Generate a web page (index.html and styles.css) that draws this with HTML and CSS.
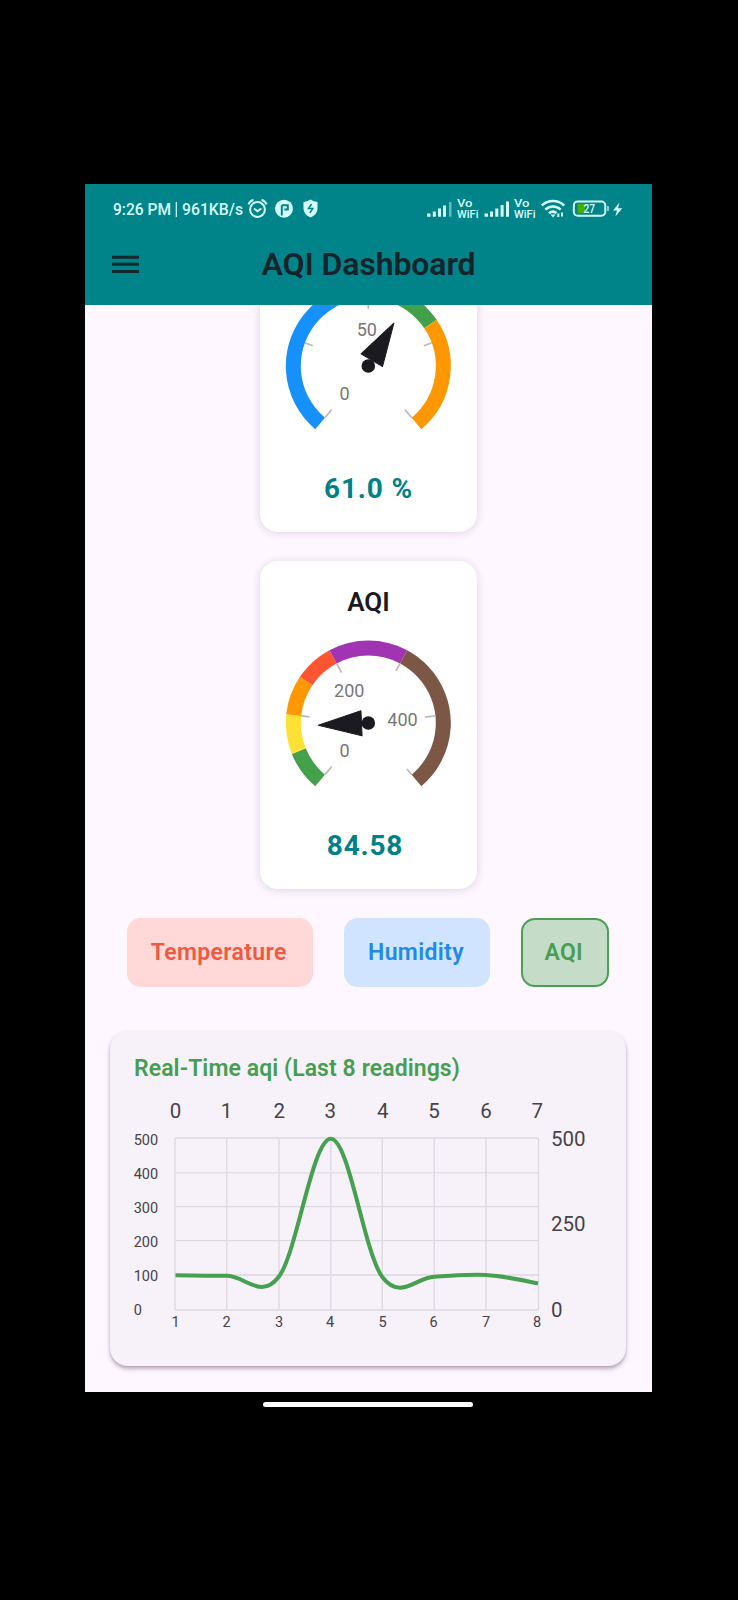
FILE: index.html
```html
<!DOCTYPE html>
<html lang="en">
<head>
<meta charset="utf-8">
<title>AQI Dashboard</title>
<link rel="stylesheet" href="styles.css">
</head>
<body>
<div class="screen">
  <header class="top">
    <svg class="status" viewBox="85 184 567 50" width="567" height="50">
      <g class="status-text">
        <text x="113" y="215" textLength="58" lengthAdjust="spacingAndGlyphs">9:26 PM</text>
        <text x="182" y="215" textLength="61" lengthAdjust="spacingAndGlyphs">961KB/s</text>
      </g>
      <path d="M176.300 202v15" class="line thin"/>
      <!-- alarm -->
      <circle cx="257.500" cy="209.500" r="7.400" class="line"/>
      <path d="M254 208.500l3.500 2.700 3.800-2.700M248.500 204.300q1.500-3.600 5-4.300M266.500 204.300q-1.500-3.600-5-4.300" class="line"/>
      <!-- app badge -->
      <circle cx="284" cy="208.700" r="9" class="fill"/>
      <path d="M281.800 215.500v-10.300M281.800 205.200h6v4.300h-3.500" class="cut"/>
      <!-- shield -->
      <path d="M310.500 199.500q3.500 2.300 7 2.500v6.500q0 6-7 9-7-3-7-9V202q3.500-.2 7-2.500z" class="fill"/>
      <path d="M311.500 204l-3 4.600h4.300l-3 4.400" class="cut fine"/>
      <!-- signals -->
      <g class="fill">
        <rect x="427" y="213.500" width="3.500" height="3.200"/><rect x="432.800" y="211.500" width="3" height="5.200"/><rect x="438" y="208.500" width="3" height="8.200"/><rect x="443" y="205.500" width="3" height="11.200"/><rect x="449" y="202" width="2.500" height="14.700" opacity=".45"/>
        <rect x="484.500" y="213.500" width="3.500" height="3.200"/><rect x="490" y="211.500" width="3" height="5.200"/><rect x="495.300" y="208.500" width="3" height="8.200"/><rect x="500.600" y="205" width="3" height="11.700"/><rect x="506" y="201.500" width="3" height="15.200"/>
      </g>
      <g class="vo">
        <text x="457" y="207.300" textLength="15.500" lengthAdjust="spacingAndGlyphs">Vo</text>
        <text x="457" y="218.300" textLength="21.500" lengthAdjust="spacingAndGlyphs">WiFi</text>
        <text x="514" y="207.300" textLength="15.500" lengthAdjust="spacingAndGlyphs">Vo</text>
        <text x="514" y="218.300" textLength="21.500" lengthAdjust="spacingAndGlyphs">WiFi</text>
      </g>
      <!-- wifi -->
      <path d="M541.800 205.500a16 16 0 0 1 22.400 0M545.300 209.700a11 11 0 0 1 15.400 0M549 213.300a6 6 0 0 1 7.500-.3" class="line wide"/>
      <path d="M550.500 214.500h5l-2.500 3z" class="fill"/>
      <path d="M558.300 217v-3.500M562 212.500v4" class="line"/>
      <!-- battery -->
      <rect x="573.800" y="201.500" width="31.500" height="14.200" rx="4" class="line"/>
      <rect x="577.500" y="203.800" width="7.500" height="9.500" class="charge"/>
      <path d="M608 206v5" class="line thin"/>
      <text x="583.500" y="213" class="pct" textLength="11.500" lengthAdjust="spacingAndGlyphs">27</text>
      <path d="M619.500 202.500l-6.500 8h4l-1.700 6 7-8.300h-4.300z" class="fill"/>
    </svg>
    <div class="appbar">
      <svg class="menu" viewBox="0 0 27 20" width="27" height="20"><path d="M0 3.300h27M0 10.300h27M0 17.500h27"/></svg>
      <h1>AQI Dashboard</h1>
    </div>
  </header>

  <main>
    <section class="card gauge-card humidity">
      <svg viewBox="278 276 181 166" width="181" height="166">
        <g transform="translate(368.300 366)">
          <g class="ring">
            <path pathLength="280" class="blue" stroke-dasharray="112 400" d="M-48.210 57.450A75 75 0 1 1 48.210 57.450"/>
            <path pathLength="280" class="green" stroke-dasharray="0 112 84 400" d="M-48.210 57.450A75 75 0 1 1 48.210 57.450"/>
            <path pathLength="280" class="orange" stroke-dasharray="0 196 84 400" d="M-48.210 57.450A75 75 0 1 1 48.210 57.450"/>
          </g>
          <g class="tick">
            <path transform="rotate(130)" d="M57 0h10.500"/><path transform="rotate(200)" d="M59 0h8.500"/><path transform="rotate(270)" d="M57 0h10.500"/><path transform="rotate(340)" d="M59 0h8.500"/><path transform="rotate(50)" d="M57 0h10.500"/>
          </g>
          <path class="needle" transform="rotate(300.800)" d="M50 0L6.800 12.500V-12.500z"/>
          <circle r="6.800" class="hub"/>
        </g>
        <g class="scale"><text x="366.800" y="335.700">50</text><text x="344.500" y="400">0</text></g>
      </svg>
      <p class="value">61.0 %</p>
    </section>

    <section class="card gauge-card index">
      <h2>AQI</h2>
      <svg viewBox="278 633.300 181 166" width="181" height="166">
        <g transform="translate(368.300 723.300)">
          <g class="ring">
            <path pathLength="280" class="green" stroke-dasharray="28 400" d="M-48.210 57.450A75 75 0 1 1 48.210 57.450"/>
            <path pathLength="280" class="yellow" stroke-dasharray="0 28 28 400" d="M-48.210 57.450A75 75 0 1 1 48.210 57.450"/>
            <path pathLength="280" class="orange" stroke-dasharray="0 56 28 400" d="M-48.210 57.450A75 75 0 1 1 48.210 57.450"/>
            <path pathLength="280" class="red" stroke-dasharray="0 84 28 400" d="M-48.210 57.450A75 75 0 1 1 48.210 57.450"/>
            <path pathLength="280" class="purple" stroke-dasharray="0 112 56 400" d="M-48.210 57.450A75 75 0 1 1 48.210 57.450"/>
            <path pathLength="280" class="brown" stroke-dasharray="0 168 112 400" d="M-48.210 57.450A75 75 0 1 1 48.210 57.450"/>
          </g>
          <g class="tick">
            <path transform="rotate(130)" d="M57 0h10.500"/><path transform="rotate(186)" d="M59 0h8.500"/><path transform="rotate(242)" d="M57 0h10.500"/><path transform="rotate(298)" d="M59 0h8.500"/><path transform="rotate(354)" d="M57 0h10.500"/><path transform="rotate(50)" d="M60 0h7.500"/>
          </g>
          <path class="needle" transform="rotate(177.400)" d="M50 0L6.800 12.500V-12.500z"/>
          <circle r="6.800" class="hub"/>
        </g>
        <g class="scale"><text x="349.300" y="697.300">200</text><text x="402.500" y="726.300">400</text><text x="344.500" y="757.300">0</text></g>
      </svg>
      <p class="value">84.58</p>
    </section>

    <nav class="tabs">
      <button class="tab temp">Temperature</button>
      <button class="tab hum">Humidity</button>
      <button class="tab aqi">AQI</button>
    </nav>

    <section class="chart-card">
      <h3>Real-Time aqi (Last 8 readings)</h3>
      <svg viewBox="110 1090 516 250" width="516" height="250">
        <path class="grid" d="M175 1138H538.500M175 1172.800H538.500M175 1206.700H538.500M175 1240.700H538.500M175 1275H538.500M175 1310H538.500M175 1138V1310M226.700 1138V1310M279 1138V1310M330.800 1138V1310M382.300 1138V1310M434.200 1138V1310M486 1138V1310M538.500 1138V1310"/>
        <path class="series" d="M175.500 1275.300C175.500 1275.300 209 1275.800 227 1275.800C245 1275.800 261 1300.500 279 1276.500C297 1252.500 312.500 1138.700 330.800 1138.700C349 1138.700 364 1252.500 382.300 1277C400.500 1301 416 1277.300 434.200 1276.700C452 1276 468 1274 486 1275C504 1276 538 1283.500 538 1283.500"/>
        <g class="axis big mid">
          <text x="175.500" y="1118.300">0</text><text x="226.500" y="1118.300">1</text><text x="279.300" y="1118.300">2</text><text x="330.300" y="1118.300">3</text><text x="382.700" y="1118.300">4</text><text x="434" y="1118.300">5</text><text x="486" y="1118.300">6</text><text x="537.300" y="1118.300">7</text>
        </g>
        <g class="axis big">
          <text x="551" y="1145.700">500</text><text x="551" y="1231">250</text><text x="551" y="1316.500">0</text>
        </g>
        <g class="axis small">
          <text x="133.700" y="1144.700">500</text><text x="133.700" y="1178.700">400</text><text x="133.700" y="1212.700">300</text><text x="133.700" y="1247.300">200</text><text x="133.700" y="1281">100</text><text x="133.700" y="1315">0</text>
        </g>
        <g class="axis small mid">
          <text x="175.500" y="1326.500">1</text><text x="226.700" y="1326.500">2</text><text x="279" y="1326.500">3</text><text x="330" y="1326.500">4</text><text x="382.500" y="1326.500">5</text><text x="433.700" y="1326.500">6</text><text x="486" y="1326.500">7</text><text x="537" y="1326.500">8</text>
        </g>
      </svg>
    </section>
  </main>
</div>
<div class="home-bar"></div>
</body>
</html>
```
FILE: styles.css
```css
* { box-sizing: border-box; }
body {
  margin: 0;
  padding: 184px 86px 0 85px;
  height: 1600px;
  background: #000;
  font-family: Roboto, "Liberation Sans", sans-serif;
  overflow: hidden;
}
h1, h2, h3, p { margin: 0; }
svg { display: block; }
.screen { width: 567px; height: 1208px; background: #fef7ff; overflow: hidden; }

.top { height: 121px; background: #008389; position: relative; }
.status-text { font: 500 16px Roboto, sans-serif; fill: #d5ffff; }
.vo { font: 500 11px Roboto, sans-serif; fill: #d5ffff; }
.pct { font: 500 12px Roboto, sans-serif; fill: #d5ffff; }
.line { fill: none; stroke: #d5ffff; stroke-width: 2; }
.thin { stroke-width: 1.2; }
.wide { stroke-width: 2.5; }
.fill { fill: #d5ffff; }
.cut { fill: none; stroke: #008389; stroke-width: 2; }
.fine { stroke-width: 1.5; }
.charge { fill: #43b000; }

.appbar { display: grid; grid-template-columns: 27px 1fr 27px; align-items: center; padding: 0 27px; height: 60px; }
.menu path { stroke: #12292d; stroke-width: 3; }
h1 { text-align: center; font-size: 32px; line-height: 36px; font-weight: 600; letter-spacing: -.1px; color: #14242a; white-space: nowrap; }

main { height: 1087px; overflow: hidden; display: flex; flex-direction: column; align-items: center; }
.card { flex: none; width: 217px; background: #fff; border-radius: 18px; box-shadow: 0 1px 8px rgba(60, 30, 70, .17); }
.gauge-card { display: flex; flex-direction: column; align-items: center; }
.humidity { height: 327px; margin-top: -100.500px; padding-top: 71.500px; }
.index { height: 328px; margin-top: 29px; padding-top: 26px; }
h2 { font-size: 26px; line-height: 31px; font-weight: 600; color: #1b1a20; }
.gauge-card svg { flex: none; }
.index svg { margin-top: 15.300px; }
.value { margin-top: 30px; font-size: 28px; line-height: 34px; font-weight: 700; letter-spacing: .8px; color: #008187; }
.index .value { padding-right: 7px; }

.ring path { fill: none; stroke-width: 15; }
.ring .blue { stroke: #1690fb; }
.ring .green { stroke: #43a04b; }
.ring .orange { stroke: #ff9800; }
.ring .yellow { stroke: #ffe135; }
.ring .red { stroke: #ff5533; }
.ring .purple { stroke: #a034b3; }
.ring .brown { stroke: #7d5746; }
.tick path { stroke: #bbb; stroke-width: 1.700; }
.needle { fill: #1b1a20; stroke: #1b1a20; stroke-width: 1; stroke-linejoin: round; }
.hub { fill: #1b1a20; }
.scale text { font-size: 18px; fill: #777; text-anchor: middle; }

.tabs { flex: none; display: flex; gap: 31px; margin: 29px 2px 0 0; height: 69px; }
.tab { border: 0; padding: 0 2px 0 0; border-radius: 14px; font: 600 23px Roboto, sans-serif; letter-spacing: .35px; }
.temp { width: 186.500px; background: #ffd8d7; color: #ee5a40; }
.hum { width: 146px; background: #d0e4ff; color: #208ae6; }
.aqi { width: 87.500px; background: #c5dcc9; color: #4a9e54; border: 2.500px solid #4aa052; }

.chart-card { flex: none; width: 516px; height: 335px; margin: 44px 1px 0 0; background: #f7f2fa; border-radius: 18px; box-shadow: 0 3px 4px rgba(40, 20, 50, .3), 0 1px 2px rgba(40, 20, 50, .12); }
h3 { padding: 23px 0 0 24px; height: 59px; font-size: 23px; line-height: 29px; font-weight: 600; letter-spacing: .08px; color: #469f50; white-space: nowrap; }
.grid { fill: none; stroke: #ded8e1; stroke-width: 1.300; }
.series { fill: none; stroke: #45a04f; stroke-width: 4; }
.axis { fill: #45424a; }
.big { font-size: 20.500px; }
.small { font-size: 14.500px; }
.mid { text-anchor: middle; }

.home-bar { width: 210px; height: 5px; margin: 9.500px 0 0 178px; border-radius: 3px; background: #fff; }
```
